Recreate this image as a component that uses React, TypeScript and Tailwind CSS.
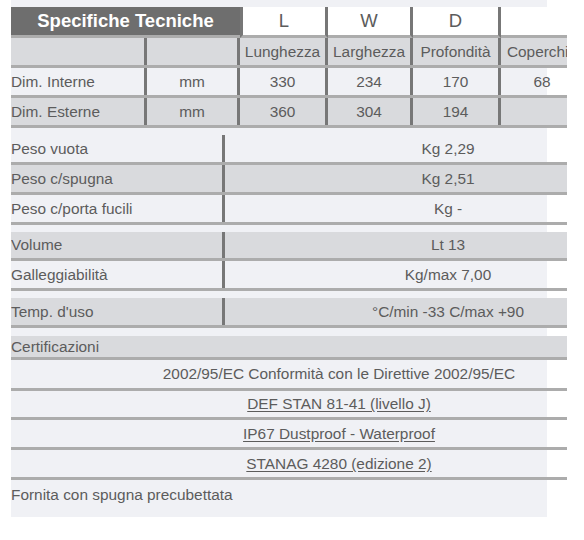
import React from "react";

const font = { fontFamily: '"Liberation Sans", Arial, sans-serif' };

type Row = { label: string; value: string; grey?: boolean; h: number };

const dims = [
  { label: "Dim. Interne", unit: "mm", vals: ["330", "234", "170", "68"], grey: false },
  { label: "Dim. Esterne", unit: "mm", vals: ["360", "304", "194", ""], grey: true },
];

const weights: Row[] = [
  { label: "Peso vuota", value: "Kg 2,29", h: 27 },
  { label: "Peso c/spugna", value: "Kg 2,51", grey: true, h: 27 },
  { label: "Peso c/porta fucili", value: "Kg -", h: 27 },
];

const volume: Row[] = [
  { label: "Volume", value: "Lt 13", grey: true, h: 26 },
  { label: "Galleggiabilità", value: "Kg/max 7,00", h: 27 },
];

const certs = [
  { text: "2002/95/EC Conformità con le Direttive 2002/95/EC", link: false, h: 28 },
  { text: "DEF STAN 81-41 (livello J)", link: true, h: 26 },
  { text: "IP67 Dustproof - Waterproof", link: true, h: 27 },
  { text: "STANAG 4280 (edizione 2)", link: true, h: 27 },
];

function PairTable({ rows }: { rows: Row[] }) {
  return (
    <div className="mt-[7px] w-[556px] overflow-hidden">
      {rows.map((r) => (
        <div
          key={r.label}
          className={`flex w-[660px] border-b-[3px] border-[#acacac] ${r.grey ? "bg-[#d9dadd]" : ""}`}
          style={{ height: r.h + 3 }}
        >
          <div className="w-[214px] shrink-0 flex items-center border-r-[3px] border-[#777777]">
            {r.label}
          </div>
          <div className="w-[446px] shrink-0 flex items-center justify-center">{r.value}</div>
        </div>
      ))}
    </div>
  );
}

export default function App() {
  return (
    <div className="w-[584px] h-[540px] bg-white text-[15.4px] text-[#5c5c5c]" style={font}>
      <div className="ml-[11px] w-[536px] h-[517px] bg-[#f0f1f5] pt-0">
        {/* Dimensioni */}
        <div className="pt-[7px] w-[556px] overflow-hidden">
          <div className="flex w-[572px] h-[31px]">
            <div className="w-[229px] shrink-0 bg-[#6e6e6e] border-b-[3px] border-[#acacac] flex items-center justify-center text-white font-bold text-[18.5px]">
              Specifiche Tecniche
            </div>
            {["L", "W", "D", ""].map((l, i) => (
              <div
                key={i}
                className={`shrink-0 bg-white border-b-[3px] border-b-[#acacac] flex items-center justify-center text-[18.5px] ${
                  i === 0 ? "w-[88px] border-l-[3px] border-l-[#777777] border-r-[3px] border-r-[#777777]" : ""
                } ${i === 1 ? "w-[85px] border-r-[3px] border-r-[#777777]" : ""} ${
                  i === 2 ? "w-[88px] border-r-[3px] border-r-[#777777]" : ""
                } ${i === 3 ? "w-[82px]" : ""}`}
              >
                {l}
              </div>
            ))}
          </div>
          <div className="flex w-[572px] h-[30px] bg-[#d9dadd] border-b-[3px] border-[#acacac]">
            <div className="w-[136px] shrink-0 border-r-[3px] border-[#777777]" />
            <div className="w-[93px] shrink-0 border-r-[3px] border-[#777777]" />
            <div className="w-[88px] shrink-0 border-r-[3px] border-[#777777] flex items-center justify-center">Lunghezza</div>
            <div className="w-[85px] shrink-0 border-r-[3px] border-[#777777] flex items-center justify-center">Larghezza</div>
            <div className="w-[88px] shrink-0 border-r-[3px] border-[#777777] flex items-center justify-center">Profondità</div>
            <div className="w-[82px] shrink-0 flex items-center justify-center">Coperchio</div>
          </div>
          {dims.map((d) => (
            <div
              key={d.label}
              className={`flex w-[572px] h-[30px] border-b-[3px] border-[#acacac] ${d.grey ? "bg-[#d9dadd]" : ""}`}
            >
              <div className="w-[136px] shrink-0 border-r-[3px] border-[#777777] flex items-center">{d.label}</div>
              <div className="w-[93px] shrink-0 border-r-[3px] border-[#777777] flex items-center justify-center">{d.unit}</div>
              <div className="w-[88px] shrink-0 border-r-[3px] border-[#777777] flex items-center justify-center">{d.vals[0]}</div>
              <div className="w-[85px] shrink-0 border-r-[3px] border-[#777777] flex items-center justify-center">{d.vals[1]}</div>
              <div className="w-[88px] shrink-0 border-r-[3px] border-[#777777] flex items-center justify-center">{d.vals[2]}</div>
              <div className="w-[82px] shrink-0 flex items-center justify-center">{d.vals[3]}</div>
            </div>
          ))}
        </div>

        <PairTable rows={weights} />
        <PairTable rows={volume} />
        <PairTable rows={[{ label: "Temp. d'uso", value: "°C/min -33 C/max +90", grey: true, h: 27 }]} />

        {/* Certificazioni */}
        <div className="mt-[8px] w-[556px] overflow-hidden">
          <div className="h-[24px] bg-[#d9dadd] border-b-[3px] border-[#acacac] flex items-center">Certificazioni</div>
          {certs.map((c) => (
            <div
              key={c.text}
              className="w-[556px] border-b-[3px] border-[#acacac] overflow-hidden"
              style={{ height: c.h + 3 }}
            >
              <div className="w-[656px] h-full flex items-center justify-center">
                <span className={c.link ? "underline underline-offset-2" : ""}>{c.text}</span>
              </div>
            </div>
          ))}
          <div className="pt-[3px]">Fornita con spugna precubettata</div>
        </div>
      </div>
    </div>
  );
}
